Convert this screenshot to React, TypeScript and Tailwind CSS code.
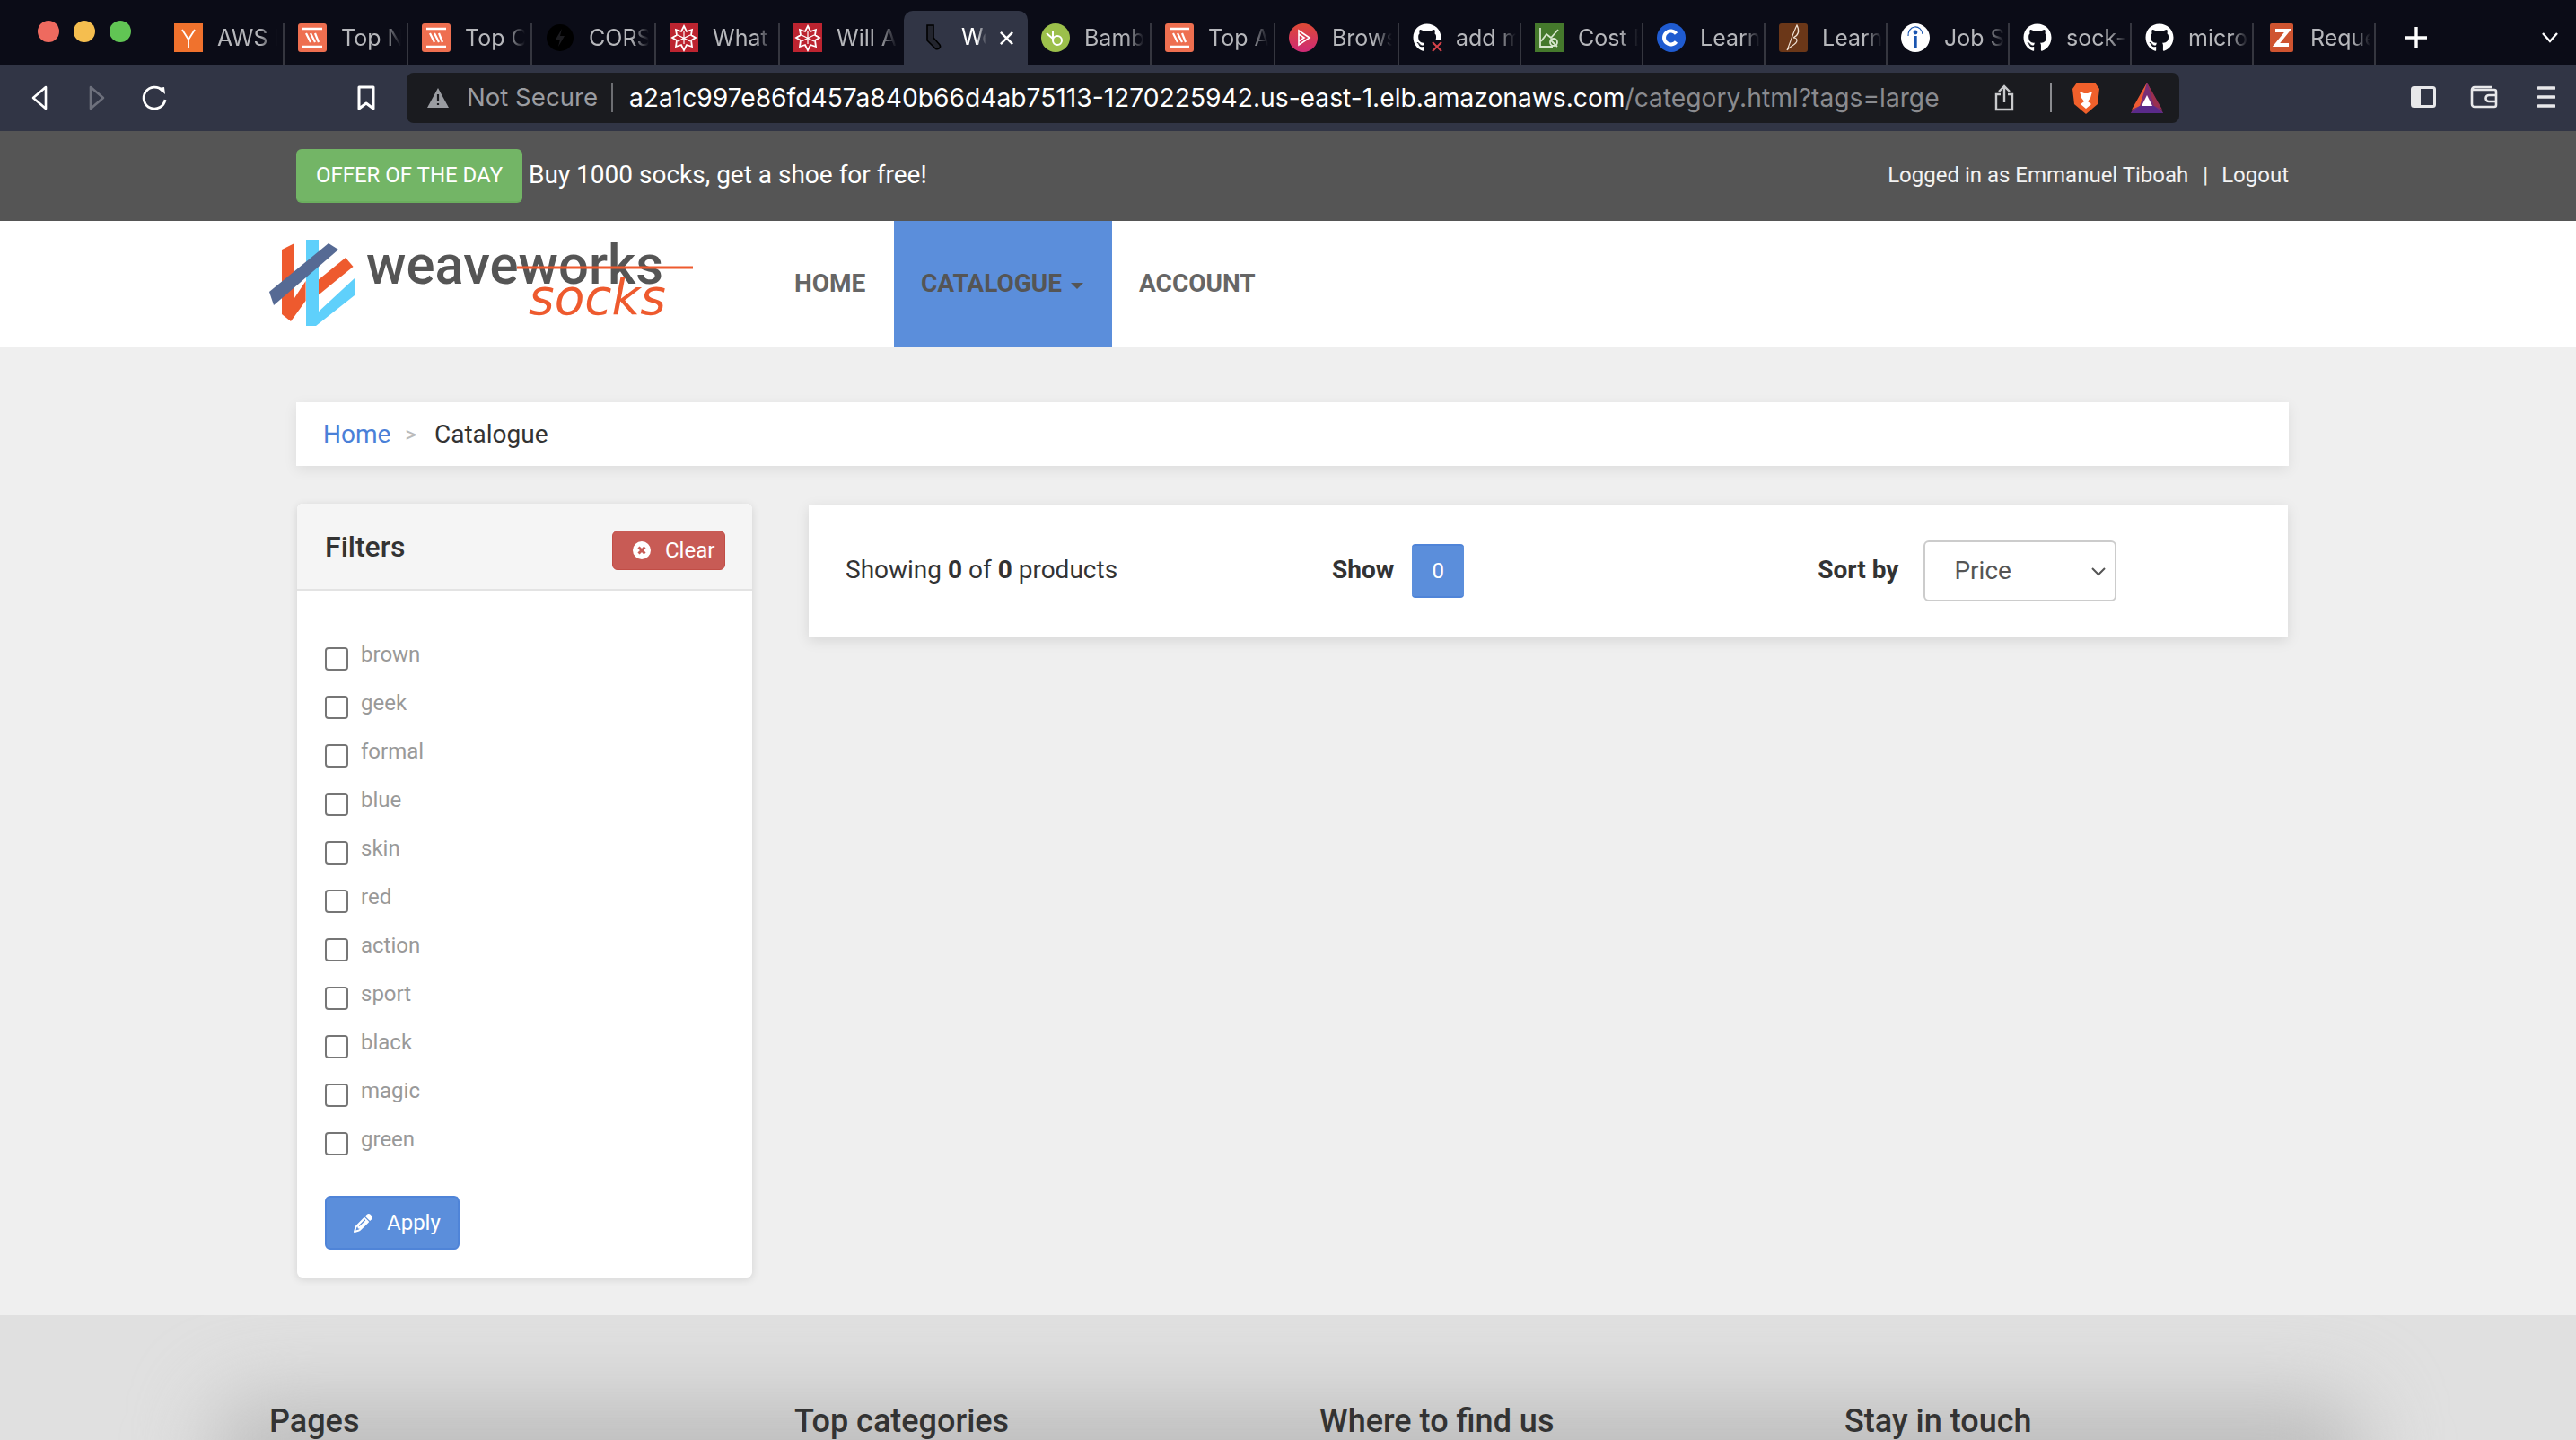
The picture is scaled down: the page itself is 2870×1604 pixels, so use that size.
import React from "react";
import { FaGithub } from "react-icons/fa";
import { FaPencil } from "react-icons/fa6";

const roboto = "font-['Roboto',sans-serif]";

function SiteIcon({ kind }: { kind: string }) {
  switch (kind) {
    case "y":
      return (
        <svg width="32" height="32" viewBox="0 0 32 32">
          <rect width="32" height="32" fill="#f0722d" />
          <path d="M9 7l7 11 7-11M16 18v9" stroke="#fff" strokeWidth="1.8" fill="none" />
        </svg>
      );
    case "s":
      return (
        <svg width="32" height="32" viewBox="0 0 32 32">
          <rect width="32" height="32" rx="3" fill="#ee6f50" />
          <path d="M5 6h22M5 26h22" stroke="#fff" strokeWidth="2.6" />
          <path d="M9 11l5 10M14 11l5 10M19 11l4 10" stroke="#fff" strokeWidth="2.2" />
        </svg>
      );
    case "bolt":
      return (
        <svg width="32" height="32" viewBox="0 0 32 32">
          <circle cx="16" cy="16" r="15" fill="#000" />
          <path d="M18 6l-7 12h5l-2 8 7-12h-5z" fill="#1c1c20" />
        </svg>
      );
    case "wolf":
      return (
        <svg width="32" height="32" viewBox="0 0 32 32">
          <rect width="32" height="32" fill="#bd2430" />
          <path d="M16 3l3 6 6-2-1 6 5 3-5 3 1 7-6-2-3 6-3-6-6 2 1-7-5-3 5-3-1-6 6 2z" fill="none" stroke="#fff" strokeWidth="1.8" />
          <path d="M16 9v14M9 13l14 7M23 13L9 20" stroke="#fff" strokeWidth="1.2" />
        </svg>
      );
    case "sock":
      return (
        <svg width="32" height="32" viewBox="0 0 32 32">
          <path d="M10 2h7v14l7 8c2 3-2 6-5 4L10 19z" fill="#23252e" stroke="#000" strokeWidth="1.6" />
        </svg>
      );
    case "bamboo":
      return (
        <svg width="32" height="32" viewBox="0 0 32 32">
          <circle cx="16" cy="16" r="16" fill="#9cc04b" />
          <circle cx="18" cy="19" r="5" fill="none" stroke="#fff" strokeWidth="2" />
          <path d="M13 8v11M6 11l7 6" stroke="#fff" strokeWidth="2" />
        </svg>
      );
    case "play":
      return (
        <svg width="32" height="32" viewBox="0 0 32 32">
          <defs>
            <linearGradient id="pl" x1="0" y1="0" x2="0" y2="1">
              <stop offset="0" stopColor="#df4a35" />
              <stop offset="1" stopColor="#cf2a76" />
            </linearGradient>
          </defs>
          <circle cx="16" cy="16" r="16" fill="url(#pl)" />
          <path d="M11 8l12 8-12 8zM11 12l6 4-6 4" fill="none" stroke="#fff" strokeWidth="1.6" />
        </svg>
      );
    case "ghx":
      return (
        <div className="relative w-8 h-8 text-white">
          <FaGithub size={32} />
          <svg className="absolute right-[-3px] bottom-[-2px]" width="16" height="16" viewBox="0 0 16 16">
            <rect width="16" height="16" fill="#0c0d18" />
            <path d="M3 3l10 10M13 3L3 13" stroke="#d8434a" strokeWidth="2" />
          </svg>
        </div>
      );
    case "cost":
      return (
        <svg width="32" height="32" viewBox="0 0 32 32">
          <rect width="32" height="32" fill="#45792c" />
          <path d="M6 5v21h14M7 20l6-8 5 4 8-9M17 18l8 8" fill="none" stroke="#d7e6cd" strokeWidth="1.8" />
          <circle cx="21" cy="21" r="4" fill="none" stroke="#d7e6cd" strokeWidth="1.8" />
        </svg>
      );
    case "c":
      return (
        <svg width="32" height="32" viewBox="0 0 32 32">
          <circle cx="16" cy="16" r="16" fill="#1f5bd0" />
          <path d="M21.5 11.5a7.5 7.5 0 1 0 0 9" fill="none" stroke="#fff" strokeWidth="4" />
        </svg>
      );
    case "b":
      return (
        <svg width="32" height="32" viewBox="0 0 32 32">
          <rect width="32" height="32" rx="3" fill="#6b3718" />
          <path d="M20 2c-4 8-7 18-11 28 3-5 11-6 11-11 0-3-4-3-4-3 4-2 8-6 4-14z" fill="none" stroke="#f1e3d6" strokeWidth="1.2" />
        </svg>
      );
    case "info":
      return (
        <svg width="32" height="32" viewBox="0 0 32 32">
          <circle cx="16" cy="16" r="16" fill="#fff" />
          <path d="M16 14v13" stroke="#1a55b0" strokeWidth="3.4" />
          <circle cx="16" cy="10" r="2.4" fill="#1a55b0" />
          <path d="M8 14a8 9 0 0 1 16-2" fill="none" stroke="#1a55b0" strokeWidth="1.2" />
        </svg>
      );
    case "gh":
      return (
        <div className="text-white">
          <FaGithub size={32} />
        </div>
      );
    case "z":
      return (
        <svg width="26" height="32" viewBox="0 0 26 32">
          <rect width="26" height="32" rx="2" fill="#cf5430" />
          <path d="M6 8h14L7 24h14" fill="none" stroke="#fff" strokeWidth="4" />
        </svg>
      );
    default:
      return null;
  }
}

const tabs = [
  ["y", "AWS E"],
  ["s", "Top Ne"],
  ["s", "Top Ca"],
  ["bolt", "CORS"],
  ["wolf", "What"],
  ["wolf", "Will A"],
  ["sock", "We"],
  ["bamboo", "Bamb"],
  ["s", "Top Au"],
  ["play", "Brows"],
  ["ghx", "add m"],
  ["cost", "Cost E"],
  ["c", "Learn"],
  ["b", "Learn"],
  ["info", "Job S"],
  ["gh", "sock-"],
  ["gh", "micro"],
  ["z", "Reque"],
];

function TabStrip() {
  return (
    <div className="h-[72px] bg-[#0b0c17] flex">
      <div className="w-[179px] shrink-0 flex items-center gap-[16px] pl-[42px] h-[70px]">
        <span className="w-6 h-6 rounded-full bg-[#ee6a5f]" />
        <span className="w-6 h-6 rounded-full bg-[#f5be4f]" />
        <span className="w-6 h-6 rounded-full bg-[#61c554]" />
      </div>
      <div className="shrink-0 flex items-end h-[72px]">
        {tabs.map(([icon, label], i) => {
          const active = i === 6;
          const width = i < 10 ? "w-[138px]" : "w-[136px]";
          return (
            <div
              key={i}
              className={
                active
                  ? "w-[138px] h-[60px] bg-[#313545] rounded-t-[10px] flex items-center pl-[16px] relative"
                  : width + " h-[46px] flex items-center pl-[15px] relative " + (i === 5 ? "" : "border-r-[2px] border-[#35363f]")
              }
            >
              <div className={active ? "w-[32px] flex justify-center shrink-0" : "w-[32px] flex justify-center shrink-0 mt-[-14px]"}>
                <SiteIcon kind={icon} />
              </div>
              {active ? (
                <>
                  <span className="ml-[16px] w-[28px] overflow-hidden whitespace-nowrap text-white text-[25px] font-['Inter',sans-serif] [mask-image:linear-gradient(90deg,#000_60%,transparent)]">
                    {label}
                  </span>
                  <svg className="ml-[14px]" width="17" height="17" viewBox="0 0 18 18">
                    <path d="M2 2l14 14M16 2L2 16" stroke="#fff" strokeWidth="2.6" />
                  </svg>
                </>
              ) : (
                <span className="ml-[16px] mt-[-14px] w-[67px] overflow-hidden whitespace-nowrap text-[#b6b7bb] text-[25px] leading-[32px] font-['Inter',sans-serif] [mask-image:linear-gradient(90deg,#000_70%,transparent)]">
                  {label}
                </span>
              )}
            </div>
          );
        })}
      </div>
      <div className="flex-1 flex items-center h-[72px] pt-[12px]">
        <svg className="ml-[32px]" width="26" height="26" viewBox="0 0 26 26">
          <path d="M13 1v24M1 13h24" stroke="#fff" strokeWidth="3.4" />
        </svg>
        <svg className="ml-[126px]" width="20" height="12" viewBox="0 0 20 12">
          <path d="M2 1l8 9 8-9" fill="none" stroke="#fff" strokeWidth="2.4" />
        </svg>
      </div>
    </div>
  );
}

function Toolbar() {
  return (
    <div className="h-[74px] bg-[#313545] flex items-center">
      <div className="w-[453px] shrink-0 flex items-center h-full">
        <svg className="ml-[34px]" width="20" height="28" viewBox="0 0 20 28">
          <path d="M17 2L3 14l14 12z" fill="none" stroke="#fff" strokeWidth="2.6" strokeLinejoin="round" />
        </svg>
        <svg className="ml-[44px]" width="20" height="28" viewBox="0 0 20 28">
          <path d="M3 2l14 12L3 26z" fill="none" stroke="#6d707c" strokeWidth="2.6" strokeLinejoin="round" />
        </svg>
        <svg className="ml-[39px]" width="30" height="30" viewBox="0 0 30 30">
          <path d="M24 7A12 12 0 1 0 27 17" fill="none" stroke="#fff" strokeWidth="2.8" />
          <path d="M19 4l7-1 1 8z" fill="#fff" />
        </svg>
        <svg className="ml-[210px]" width="22" height="28" viewBox="0 0 22 28">
          <path d="M3 2h16v24l-8-6-8 6z" fill="none" stroke="#fff" strokeWidth="3" strokeLinejoin="round" />
        </svg>
      </div>
      <div className="w-[1975px] h-[56px] rounded-[8px] bg-[#1a1b1f] flex items-center shrink-0 font-['Inter',sans-serif] text-[28.2px]">
        <svg className="ml-[22px]" width="26" height="24" viewBox="0 0 26 24">
          <path d="M13 1l12 22H1z" fill="#9a9ca1" />
          <path d="M13 8v8M13 18v2" stroke="#1a1b1f" strokeWidth="2.2" />
        </svg>
        <span className="ml-[19px] text-[#9a9ca1] whitespace-nowrap text-[27.6px]">Not Secure</span>
        <span className="ml-[15px] w-[2px] h-[32px] bg-[#6d6e72]" />
        <span className="ml-[18px] text-white whitespace-nowrap">
          a2a1c997e86fd457a840b66d4ab75113-1270225942.us-east-1.elb.amazonaws.com
          <span className="text-[#8a8b8f]">/category.html?tags=large</span>
        </span>
        <div className="flex-1" />
        <svg width="24" height="30" viewBox="0 0 24 30">
          <path d="M8 11H3v17h18V11h-5M12 20V2M6 8l6-6 6 6" fill="none" stroke="#c9cacc" strokeWidth="2.4" />
        </svg>
        <span className="ml-[39px] w-[2px] h-[32px] bg-[#8a8b8f]" />
        <svg className="ml-[22px]" width="32" height="36" viewBox="0 0 32 36">
          <path d="M6 1h20l5 7-2 17-13 11L3 25 1 8z" fill="#f0602b" />
          <path d="M9 11l5 2h4l5-2-2 7-3 4 4 3-6 5-6-5 4-3-3-4z" fill="#fff" />
        </svg>
        <svg className="ml-[34px]" width="36" height="34" viewBox="0 0 36 34">
          <path d="M18 0L0 34h36z" fill="#7a2f76" />
          <path d="M18 0L1 30l9-4z" fill="#ee5b33" />
          <path d="M18 0l17 30-9-4z" fill="#9a2f4f" />
          <path d="M18 14l-6 12h12z" fill="#fff" />
          <path d="M0 34l10-8h16l10 8z" fill="#5a2a8a" />
        </svg>
        <span className="w-[18px]" />
      </div>
      <div className="flex-1 flex items-center">
        <svg className="ml-[258px] mt-[-2px]" width="28" height="24" viewBox="0 0 28 24">
          <rect x="1.5" y="1.5" width="25" height="21" rx="2" fill="none" stroke="#e8e8ea" strokeWidth="3" />
          <rect x="2" y="2" width="9" height="20" fill="#e8e8ea" />
        </svg>
        <svg className="ml-[38px] mt-[-2px]" width="32" height="26" viewBox="0 0 32 26">
          <path d="M3 5h24a2 2 0 0 1 2 2v15a2 2 0 0 1-2 2H5a3 3 0 0 1-3-3V5a3 3 0 0 1 3-3h19" fill="none" stroke="#e8e8ea" strokeWidth="2.6" />
          <path d="M30 11H21a3 3 0 0 0 0 7h9" fill="none" stroke="#e8e8ea" strokeWidth="2.6" />
        </svg>
        <svg className="ml-[43px] mt-[-2px]" width="20" height="26" viewBox="0 0 20 26">
          <path d="M1 3h18M1 13h18M1 23h18" stroke="#e8e8ea" strokeWidth="3.4" strokeLinecap="round" />
        </svg>
      </div>
    </div>
  );
}

function Logo() {
  return (
    <svg width="480" height="100" viewBox="0 0 480 100" className="shrink-0">
      <path d="M14 11L28 4V65L40.6 46V68L24 91L14 83Z" fill="#ee5a2e" />
      <path d="M53 46L85 20L93.5 30L53 63Z" fill="#ee5a2e" />
      <path d="M41 0H55V80L95 43V62L52 96H41Z" fill="#5fd0fb" />
      <path d="M0 58L66 4L77 11L5 73Z" fill="#566a94" />
      <text x="108" y="49" fontFamily="Roboto, sans-serif" fontWeight="500" fontSize="62" fill="#555" textLength="331" lengthAdjust="spacingAndGlyphs">
        weaveworks
      </text>
      <path d="M276 31h196" stroke="#ee5a2e" strokeWidth="3" />
      <text x="289" y="83" fontFamily="'DejaVu Sans', sans-serif" fontSize="56" fontStyle="oblique" fill="#ee5a2e" textLength="153" lengthAdjust="spacingAndGlyphs">
        socks
      </text>
    </svg>
  );
}

function Footer() {
  return (
    <div className="h-[139px] bg-[#e0e0e0] relative overflow-hidden">
      <div className="absolute left-[240px] right-[240px] bottom-[-105px] h-[150px] bg-[#bdbdbd] blur-[45px] rounded-[40px]" />
      <div className={"relative w-[2340px] ml-[300px] grid grid-cols-4 pt-[95px] text-[36px] leading-[46px] font-medium text-[#333] " + roboto}>
        <div>Pages</div>
        <div>Top categories</div>
        <div>Where to find us</div>
        <div>Stay in touch</div>
      </div>
    </div>
  );
}

export default function App() {
  const filters = ["brown", "geek", "formal", "blue", "skin", "red", "action", "sport", "black", "magic", "green"];
  return (
    <div className={"w-[2870px] h-[1604px] overflow-hidden bg-[#efefef] " + roboto}>
      <TabStrip />
      <Toolbar />

      <div className="h-[100px] bg-[#555555] flex items-center">
        <div className="w-[2220px] ml-[330px] flex items-center justify-between">
          <div className="flex items-center">
            <span className="w-[252px] h-[60px] rounded-[6px] bg-[#73b566] border-b-2 border-[#6bae5e] text-white text-[24px] flex items-center justify-center">
              OFFER OF THE DAY
            </span>
            <span className="ml-[7px] text-white text-[28px] mt-[-3px]">Buy 1000 socks, get a shoe for free!</span>
          </div>
          <div className="text-[#f2f2f2] text-[24px] mt-[-3px] whitespace-nowrap flex">
            <span>Logged in as Emmanuel Tiboah</span>
            <span className="ml-[16px]">|</span>
            <span className="ml-[15px]">Logout</span>
          </div>
        </div>
      </div>

      <div className="bg-white flex items-stretch border-b border-[#e6e6e6] box-content h-[140px]">
        <div className="ml-[300px] flex items-start pt-[21px] w-[585px]">
          <Logo />
        </div>
        <div className="flex text-[28px] font-bold text-[#666]">
          <a className="w-[111px] pt-[49px]">HOME</a>
          <a className="w-[243px] pl-[30px] bg-[#5b8edb] text-[#555] pt-[49px] whitespace-nowrap">
            CATALOGUE
            <span className="inline-block ml-[10px] mb-[3px] border-x-[7px] border-x-transparent border-t-[7px] border-t-[#555]" />
          </a>
          <a className="ml-[30px] pt-[49px]">ACCOUNT</a>
        </div>
      </div>

      <div className="w-[2220px] ml-[330px] pt-[61px]">
        <div className="h-[71px] bg-white shadow-[0_4px_14px_rgba(0,0,0,0.08)] flex items-center pl-[30px] text-[28px] mt-0">
          <span className="text-[#4a80d8]">Home</span>
          <span className="text-[#bbb] ml-[16px] text-[24px]">&gt;</span>
          <span className="text-[#333] ml-[20px]">Catalogue</span>
        </div>

        <div className="flex items-start mt-[42px]">
          <div className="w-[507px] ml-[1px] h-[862px] bg-white rounded-[6px] shadow-[0_2px_10px_rgba(0,0,0,0.12)] overflow-hidden shrink-0">
            <div className="h-[97px] bg-[#f5f5f5] border-b-2 border-[#e3e3e3] flex items-start justify-between pl-[31px] pr-[30px]">
              <span className="text-[32px] font-medium text-[#333] mt-[28px] leading-[40px]">Filters</span>
              <button className="mt-[30px] w-[126px] h-[44px] rounded-[6px] bg-[#c85b55] border border-[#c14d46] text-white text-[24px] flex items-center pl-[21px]">
                <svg width="22" height="22" viewBox="0 0 22 22">
                  <circle cx="11" cy="11" r="10" fill="#fff" />
                  <path d="M7.5 7.5l7 7M14.5 7.5l-7 7" stroke="#c85b55" strokeWidth="3" />
                </svg>
                <span className="ml-[15px]">Clear</span>
              </button>
            </div>
            <div className="pt-[58px] pl-[31px]">
              {filters.map((f) => (
                <div key={f} className="h-[54px] flex items-start">
                  <span className="w-[26px] h-[26px] mt-[5px] rounded-[4px] border-2 border-[#767676] bg-white shrink-0" />
                  <span className="ml-[14px] text-[24px] leading-[28px] text-[#999] mt-[-1px]">{f}</span>
                </div>
              ))}
              <button className="mt-[22px] w-[150px] h-[60px] rounded-[6px] bg-[#5b8edb] border-2 border-[#4f84d8] text-white text-[24px] flex items-center pl-[30px]">
                <FaPencil size={21} />
                <span className="ml-[16px]">Apply</span>
              </button>
            </div>
          </div>

          <div className="ml-[63px] mt-[1px] w-[1648px] h-[148px] bg-white shadow-[0_4px_14px_rgba(0,0,0,0.1)] flex items-center text-[28px] text-[#333]">
            <span className="ml-[41px] w-[542px] mt-[-2px]">
              Showing <b className="font-bold">0</b> of <b className="font-bold">0</b> products
            </span>
            <b className="font-bold mt-[-2px]">Show</b>
            <span className="ml-[20px] w-[58px] h-[60px] rounded-[4px] bg-[#5b8edb] border-y-2 border-[#4f84d8] text-white text-[24px] flex items-center justify-center">
              0
            </span>
            <b className="ml-[394px] font-bold mt-[-2px]">Sort by</b>
            <div className="ml-[28px] w-[215px] h-[68px] rounded-[6px] border-2 border-[#cccccc] flex items-center pl-[32px] text-[#555] relative">
              Price
              <svg className="absolute right-[10px] top-[28px]" width="16" height="10" viewBox="0 0 16 10">
                <path d="M1 1l7 7 7-7" fill="none" stroke="#555" strokeWidth="2" />
              </svg>
            </div>
          </div>
        </div>
      </div>

      <div className="mt-[42px]">
        <Footer />
      </div>
    </div>
  );
}
